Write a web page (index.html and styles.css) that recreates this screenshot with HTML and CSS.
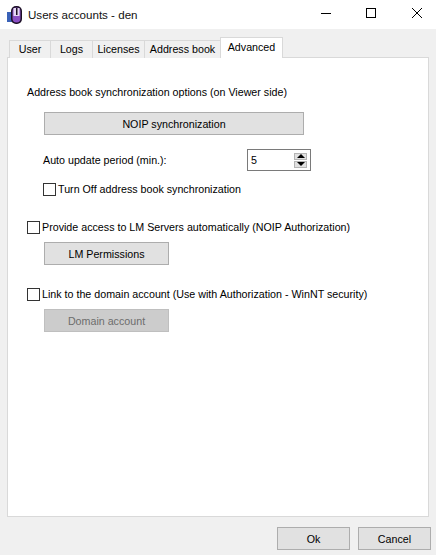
FILE: index.html
```html
<!DOCTYPE html>
<html lang="en">
<head>
  <meta charset="UTF-8">
  <meta name="viewport" content="width=device-width, initial-scale=1.0">
  <title>Users accounts - den</title>
  <link rel="stylesheet" href="styles.css">
</head>
<body>
  <div class="titlebar">
    <svg class="app-icon" width="18" height="18" viewBox="0 0 18 18">
      <rect x="1" y="6" width="6" height="10" fill="#3a62b8"/>
      <rect x="5" y="0" width="11" height="18" rx="5" fill="#1c1026"/>
      <rect x="6.5" y="1.5" width="8" height="15" rx="4" fill="#8a4fc4"/>
      <rect x="7.5" y="2" width="6" height="8" fill="#e6d8f5"/>
      <rect x="10" y="2" width="1.5" height="7" fill="#1c1026"/>
    </svg>
    <span class="title">Users accounts - den</span>
    <div class="window-buttons">
      <svg width="46" height="29" viewBox="0 0 46 29"><path d="M23 13.5H33" stroke="#000" fill="none"/></svg>
      <svg width="46" height="29" viewBox="0 0 46 29"><rect x="22.5" y="8.5" width="9" height="9" stroke="#000" fill="none"/></svg>
      <svg width="46" height="29" viewBox="0 0 46 29"><path d="M22 8L32 18M32 8L22 18" stroke="#000" fill="none"/></svg>
    </div>
  </div>

  <div class="dialog">
    <div class="tabs">
      <div class="tab tab-user">User</div>
      <div class="tab tab-logs">Logs</div>
      <div class="tab tab-licenses">Licenses</div>
      <div class="tab tab-book">Address book</div>
      <div class="tab tab-active">Advanced</div>
    </div>

    <div class="pane">
      <p class="section-label">Address book synchronization options (on Viewer side)</p>
      <button class="btn btn-wide">NOIP synchronization</button>

      <div class="period-row">
        <span>Auto update period (min.):</span>
        <div class="spinner">
          <span>5</span>
          <div class="spin-buttons">
            <div class="spin-btn"><i class="arrow-up"></i></div>
            <div class="spin-btn"><i class="arrow-down"></i></div>
          </div>
        </div>
      </div>

      <label class="check check-inner"><i class="box"></i>Turn Off address book synchronization</label>

      <label class="check check-access"><i class="box"></i>Provide access to LM Servers automatically (NOIP Authorization)</label>
      <button class="btn btn-small">LM Permissions</button>

      <label class="check check-domain"><i class="box"></i>Link to the domain account (Use with Authorization - WinNT security)</label>
      <button class="btn btn-small btn-disabled">Domain account</button>
    </div>

    <div class="footer">
      <button class="btn btn-footer">Ok</button>
      <button class="btn btn-footer">Cancel</button>
    </div>
  </div>
</body>
</html>
```

FILE: styles.css
```css
* {
  box-sizing: border-box;
}

body {
  margin: 0;
  height: 555px;
  overflow: hidden;
  display: flex;
  flex-direction: column;
  background-color: #f0f0f0;
  font-family: "Liberation Sans", Arial, sans-serif;
  font-size: 10.7px;
  color: #000;
}

/* Title bar */
.titlebar {
  display: flex;
  align-items: center;
  height: 29px;
  background-color: #fff;
  padding-left: 6px;
}

.app-icon {
  margin-right: 4px;
}

.title {
  font-size: 11.6px;
  color: #111;
}

.window-buttons {
  display: flex;
  margin-left: auto;
}

.window-buttons svg {
  display: block;
}

/* Tabs */
.dialog {
  flex: 1;
  display: flex;
  flex-direction: column;
  padding: 8px 7px 0 7px;
}

.tabs {
  display: flex;
  align-items: flex-end;
  height: 21px;
  padding-left: 2px;
  margin-bottom: -1px;
  position: relative;
  z-index: 1;
}

.tab {
  height: 18px;
  line-height: 17px;
  text-align: center;
  background-color: #f0f0f0;
  border: 1px solid #d9d9d9;
  border-left: none;
  border-bottom: none;
}

.tab-user {
  width: 42px;
  border-left: 1px solid #d9d9d9;
}

.tab-logs {
  width: 42px;
}

.tab-licenses {
  width: 52px;
}

.tab-book {
  width: 76px;
}

.tab-active {
  width: 63px;
  height: 21px;
  line-height: 18px;
  background-color: #fff;
  border-left: 1px solid #d9d9d9;
  margin-left: -1px;
}

.pane {
  height: 460px;
  background-color: #fff;
  border: 1px solid #d9d9d9;
  display: flex;
  flex-direction: column;
  align-items: flex-start;
  padding: 26px 0 0 19px;
}

.section-label {
  margin: 0;
  line-height: 16px;
}

/* Buttons */
.btn {
  display: block;
  padding: 0;
  background-color: #e1e1e1;
  border: 1px solid #adadad;
  font: inherit;
  color: #000;
}

.btn-wide {
  width: 260px;
  height: 23px;
  margin: 12px 0 0 17px;
}

.btn-small {
  width: 125px;
  height: 23px;
  margin-left: 17px;
}

.btn-disabled {
  background-color: #cccccc;
  border-color: #bfbfbf;
  color: #6d6d6d;
}

/* Spin box */
.period-row {
  display: flex;
  align-items: center;
  justify-content: space-between;
  width: 268px;
  height: 22px;
  margin: 14px 0 0 16px;
}

.spinner {
  width: 64px;
  height: 22px;
  display: flex;
  align-items: center;
  justify-content: space-between;
  padding: 0 3px 0 3px;
  border: 1px solid #7a7a7a;
  background-color: #fff;
}

.spin-buttons {
  display: flex;
  flex-direction: column;
  gap: 1px;
}

.spin-btn {
  width: 13px;
  height: 7px;
  background-color: #e1e1e1;
  border: 1px solid #b5b5b5;
  display: flex;
  align-items: center;
  justify-content: center;
}

.arrow-up {
  border-left: 4px solid transparent;
  border-right: 4px solid transparent;
  border-bottom: 4px solid #000;
}

.arrow-down {
  border-left: 4px solid transparent;
  border-right: 4px solid transparent;
  border-top: 4px solid #000;
}

/* Check boxes */
.check {
  display: flex;
  align-items: center;
  line-height: 16px;
  white-space: nowrap;
}

.box {
  width: 13px;
  height: 13px;
  margin-right: 2px;
  border: 1px solid #333;
  background-color: #fff;
}

.check-inner {
  margin: 10px 0 0 16px;
}

.check-access {
  margin: 22px 0 7px 0;
}

.check-domain {
  margin: 21px 0 7px 0;
}

/* Footer */
.footer {
  display: flex;
  justify-content: flex-end;
  gap: 8px;
  padding: 10px 0 0 0;
  margin-right: -2px;
}

.btn-footer {
  width: 73px;
  height: 23px;
}
```
